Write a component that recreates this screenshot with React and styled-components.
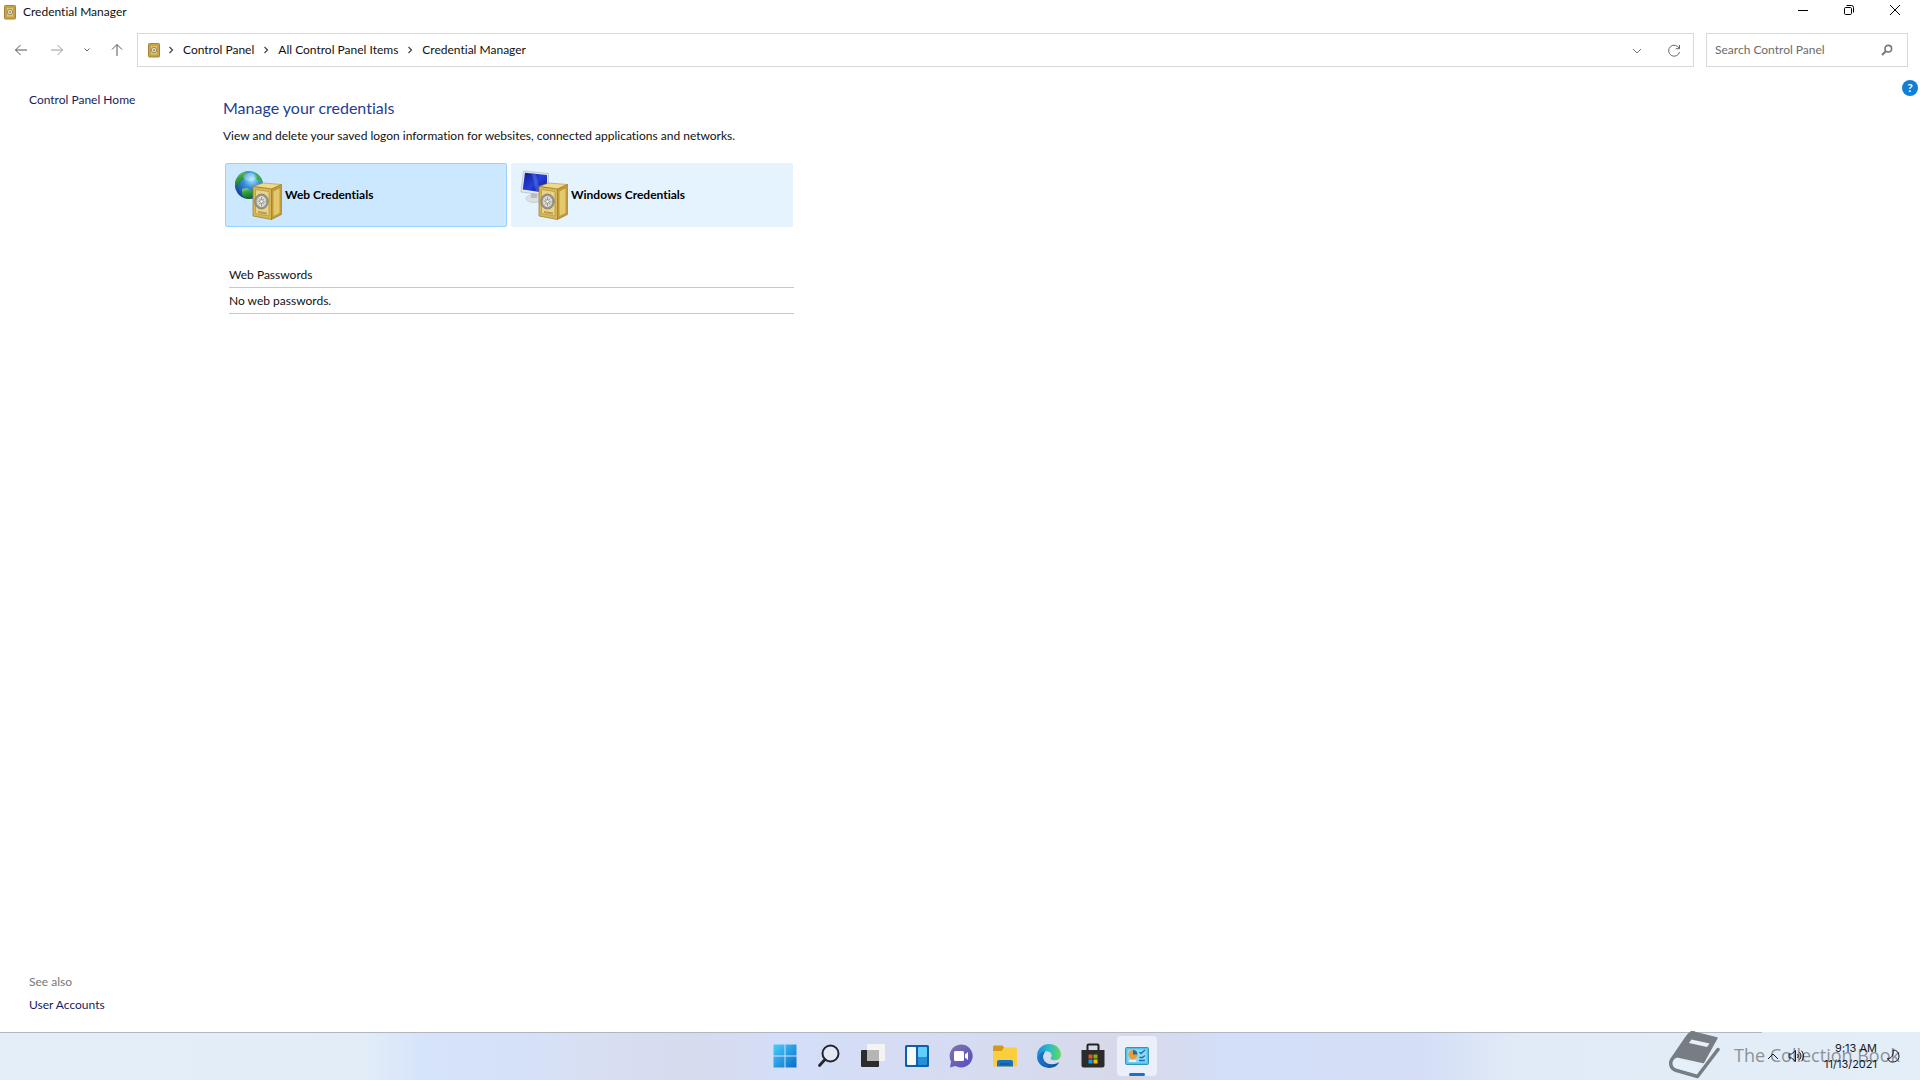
import React, { useState } from 'react';
import styled, { createGlobalStyle } from 'styled-components';

const tiles = [
  { id: 'web', label: 'Web Credentials', heading: 'Web Passwords', empty: 'No web passwords.' },
  { id: 'windows', label: 'Windows Credentials', heading: 'Windows Credentials', empty: 'No Windows credentials.' },
];

const crumbs = ['Control Panel', 'All Control Panel Items', 'Credential Manager'];

function App() {
  const [vault, setVault] = useState('web');
  const current = tiles.find(t => t.id === vault);

  return (
    <Screen>
      <GlobalStyle />

      <TitleBar>
        <SmallSafe />
        <Title>Credential Manager</Title>
        <WindowButton aria-label="Minimize"><Line viewBox="0 0 12 12" $size={12}><path d="M1 6.5h10" /></Line></WindowButton>
        <WindowButton aria-label="Restore">
          <Line viewBox="0 0 12 12" $size={12}>
            <rect x="1.5" y="3.5" width="7" height="7" rx="1.2" />
            <path d="M3.5 1.5h5a2 2 0 0 1 2 2v5" />
          </Line>
        </WindowButton>
        <WindowButton aria-label="Close"><Line viewBox="0 0 12 12" $size={12}><path d="M1 1l10 10M11 1L1 11" /></Line></WindowButton>
      </TitleBar>

      <NavBar>
        <NavButtons>
          <IconButton $width={32} $color="#555" aria-label="Back"><Line viewBox="0 0 14 14" $size={14}><path d="M13 7H1.5M6.5 2l-5 5 5 5" /></Line></IconButton>
          <IconButton $width={32} $color="#9a9a9a" aria-label="Forward"><Line viewBox="0 0 14 14" $size={14}><path d="M1 7h11.5M7.5 2l5 5-5 5" /></Line></IconButton>
          <IconButton $width={20} $color="#666" aria-label="Recent locations"><Line viewBox="0 0 8 8" $size={8}><path d="M1.5 2.5l2.5 2.5 2.5-2.5" /></Line></IconButton>
          <IconButton $width={32} $color="#555" aria-label="Up"><Line viewBox="0 0 14 14" $size={14}><path d="M7 13V1.5M2 6.5l5-5 5 5" /></Line></IconButton>
        </NavButtons>
        <AddressBar>
          <SmallSafe />
          <Crumbs aria-label="Location">
            {crumbs.map(name => (
              <React.Fragment key={name}>
                <CrumbArrow viewBox="0 0 6 8"><path d="M1.5 1l3 3-3 3" /></CrumbArrow>
                <Crumb href="#">{name}</Crumb>
              </React.Fragment>
            ))}
          </Crumbs>
          <IconButton $width={37} $color="#777" aria-label="Previous locations"><Line viewBox="0 0 10 10" $size={10}><path d="M1 4l4 4 4-4" /></Line></IconButton>
          <IconButton $width={37} $color="#666" aria-label="Refresh">
            <Line viewBox="0 0 14 14" $size={14}><path d="M12.2 5.500A5.500 5.500 0 1 0 12.500 9M12.500 2V5.700H8.800" /></Line>
          </IconButton>
        </AddressBar>
        <SearchBox>
          <SearchInput type="text" placeholder="Search Control Panel" aria-label="Search Control Panel" />
          <svg width="12" height="12" viewBox="0 0 12 12" fill="none" stroke="#777">
            <circle cx="7.3" cy="4.7" r="3.3" strokeWidth="1.6" />
            <path d="M5 7L1 11" strokeWidth="2" />
          </svg>
        </SearchBox>
      </NavBar>

      <Content>
        <Sidebar>
          <SideLink href="#">Control Panel Home</SideLink>
          <SeeAlso>
            <SeeAlsoTitle>See also</SeeAlsoTitle>
            <SideLink href="#">User Accounts</SideLink>
          </SeeAlso>
        </Sidebar>

        <Main>
          <Heading>Manage your credentials</Heading>
          <Description>View and delete your saved logon information for websites, connected applications and networks.</Description>
          <Tiles>
            {tiles.map(t => (
              <Tile key={t.id} $selected={vault === t.id} aria-pressed={vault === t.id} onClick={() => setVault(t.id)}>
                {t.id === 'web' ? <WebIcon /> : <WindowsIcon />}
                {t.label}
              </Tile>
            ))}
          </Tiles>
          <List>
            <ListRow>{current.heading}</ListRow>
            <ListRow>{current.empty}</ListRow>
          </List>
        </Main>

        <HelpButton aria-label="Help">?</HelpButton>
      </Content>

      <Taskbar>
        <Watermark>
          <Book />
          The Collection Book
        </Watermark>
        <Apps>
          <AppButton aria-label="Start"><StartIcon /></AppButton>
          <AppButton aria-label="Search"><SearchIcon /></AppButton>
          <AppButton aria-label="Task View"><TaskViewIcon /></AppButton>
          <AppButton aria-label="Widgets"><WidgetsIcon /></AppButton>
          <AppButton aria-label="Chat"><ChatIcon /></AppButton>
          <AppButton aria-label="File Explorer"><FolderIcon /></AppButton>
          <AppButton aria-label="Edge"><EdgeIcon /></AppButton>
          <AppButton aria-label="Microsoft Store"><StoreIcon /></AppButton>
          <AppButton aria-label="Control Panel" $active><ControlPanelIcon /></AppButton>
        </Apps>
        <Tray>
          <TrayButton $width={24} aria-label="Show hidden icons"><Line viewBox="0 0 12 12" $size={12}><path d="M1 9l5-5 5 5" /></Line></TrayButton>
          <TrayButton $width={24} aria-label="Volume">
            <Line viewBox="0 0 18 14" $size={18}>
              <path d="M1 5h2.5L7.5 1.5v11L3.5 9H1zM9.5 5a3 3 0 0 1 0 4M11.5 3.3a5.5 5.5 0 0 1 0 7.4M13.5 1.7a8 8 0 0 1 0 10.6" />
            </Line>
          </TrayButton>
          <Clock>
            <span>9:13 AM</span>
            <span>11/13/2021</span>
          </Clock>
          <TrayButton $width={24} aria-label="Focus assist">
            <Line viewBox="0 0 14 14" $size={14}><path d="M7 1a6 6 0 1 1-5.5 8.500C5 10 8 6 7 1z" /></Line>
          </TrayButton>
        </Tray>
      </Taskbar>
    </Screen>
  )
}

const SmallSafe = () => (
  <svg width="12" height="15" viewBox="0 0 12 15">
    <rect x="0.5" y="0.5" width="11" height="13.5" rx="0.8" fill="#c9a545" stroke="#a3843a" />
    <rect x="2.5" y="2.5" width="7" height="9.5" fill="#dcc473" stroke="#b89b4c" strokeWidth="0.7" />
    <circle cx="6" cy="7" r="2.700" fill="#eadfb4" stroke="#8d8564" strokeWidth="0.9" />
    <circle cx="6" cy="7" r="1" fill="#8a8468" />
  </svg>
)

const BigSafe = () => (
  <g>
    <path d="M19 16.500L29 13 47.500 14.500 37.500 19z" fill="#f0d98c" stroke="#b08d38" strokeWidth="0.6" />
    <path d="M37.500 19l10-4.500v30l-10 5z" fill="#c29a3c" stroke="#957428" strokeWidth="0.6" />
    <path d="M39.500 21.500l6-3v24.500l-6 3z" fill="#e3c96c" />
    <path d="M19 16.500l18.500 2.500v30.500L19 46z" fill="#d8b852" stroke="#96772c" strokeWidth="0.7" />
    <path d="M21.500 19.500l13.500 2v24.500l-13.500-2.500z" fill="#e9d388" stroke="#b3913f" strokeWidth="0.7" />
    <path d="M24 41l9 1.500v2l-9-1.500z" fill="#bd9a45" />
    <ellipse cx="27.500" cy="31.500" rx="6.800" ry="7.500" fill="#99978b" stroke="#807d70" strokeWidth="0.8" />
    <ellipse cx="27.500" cy="31.500" rx="5" ry="5.800" fill="#dfded8" stroke="#8e8c83" strokeDasharray="1 1" />
    <path d="M27.500 27v9M23.500 31l8 1M25 28.500l5 6M30 28.500l-5 6" stroke="#8e8c83" strokeWidth="0.9" />
    <circle cx="27.500" cy="31.500" r="1.700" fill="#f4f3ee" stroke="#77756d" strokeWidth="0.5" />
  </g>
)

const WebIcon = () => (
  <svg width="50" height="50" viewBox="0 0 50 50">
    <defs>
      <radialGradient id="sea" cx="60%" cy="30%" r="75%">
        <stop offset="0" stopColor="#a3ebff" />
        <stop offset="0.4" stopColor="#378fdc" />
        <stop offset="1" stopColor="#123b91" />
      </radialGradient>
      <linearGradient id="land" x1="0" y1="0" x2="0.3" y2="1">
        <stop offset="0" stopColor="#a5dc80" />
        <stop offset="0.4" stopColor="#38a548" />
        <stop offset="1" stopColor="#126d25" />
      </linearGradient>
    </defs>
    <circle cx="15" cy="15" r="14" fill="url(#sea)" />
    <path d="M3 8C5 4 8 2 12 1.500l1 2-3 2 1 3-4 2-2 4-3 1v3c-1-3-1-7 1-10.500z" fill="url(#land)" />
    <path d="M20 2.500c4 1.500 7 5 8.500 9l-3 1-2-3-2-1-1-3z" fill="#3eaa51" />
    <path d="M8 19l5-1 3 2 4 1v4l-4 4c-4 0-7-2-8-5z" fill="url(#land)" />
    <ellipse cx="16" cy="7" rx="7" ry="4" fill="#fff" opacity="0.25" />
    <BigSafe />
  </svg>
)

const WindowsIcon = () => (
  <svg width="50" height="50" viewBox="0 0 50 50">
    <defs>
      <linearGradient id="screen" x1="0" y1="0" x2="1" y2="1">
        <stop offset="0" stopColor="#101a98" />
        <stop offset="0.5" stopColor="#2541d8" />
        <stop offset="1" stopColor="#0a1288" />
      </linearGradient>
    </defs>
    <ellipse cx="14" cy="28.500" rx="8" ry="4" fill="#dcdfe2" stroke="#b9bdc2" strokeWidth="0.6" />
    <path d="M11 20l6 1v7h-6z" fill="#b8bdc3" />
    <path d="M3.500 1L28.500 3.500v22L1 22z" fill="#e3e8ed" stroke="#a9b0b8" strokeWidth="0.6" />
    <path d="M5 2.800L27 5v18L2.800 19.500z" fill="url(#screen)" />
    <path d="M12 3.600l4 .5 4 18-4-.600z" fill="#6a82f0" opacity="0.4" />
    <BigSafe />
  </svg>
)

const Book = () => (
  <svg width="52" height="48" viewBox="0 0 52 48">
    <path d="M25 1L49 7 35.500 31.500 8 25.500z" fill="#777d83" stroke="#777d83" strokeWidth="1.500" strokeLinejoin="round" />
    <path d="M25 1C22 2 20 5 18 8L3.500 29c-1.500 3-1 8 3.500 10L29.500 45.500 50 18.500" fill="none" stroke="#777d83" strokeWidth="3.500" strokeLinejoin="round" strokeLinecap="round" />
    <path d="M22 4L4 29l5-2.500 4-8z" fill="#777d83" />
    <path d="M6 30.500c2-2 4-1.500 6-1l20.500 5c-3 2-3.500 5-3 8.500L9 37.500c-3-1-4.500-4-3-7z" fill="#e6f0fa" />
    <path d="M23.500 8.500l18 4-2.500 3.500-18-4z" fill="#e6f0fa" />
  </svg>
)

const StartIcon = () => (
  <svg width="24" height="24" viewBox="0 0 24 24">
    <defs>
      <linearGradient id="start" x1="0" y1="0" x2="24" y2="24" gradientUnits="userSpaceOnUse">
        <stop offset="0" stopColor="#4fd0fb" />
        <stop offset="1" stopColor="#0669c9" />
      </linearGradient>
    </defs>
    <path d="M.5.5h11v11H.5zM12.5.5h11v11h-11zM.5 12.5h11v11H.5zM12.5 12.5h11v11h-11z" fill="url(#start)" />
  </svg>
)

const SearchIcon = () => (
  <svg width="24" height="24" viewBox="0 0 24 24" fill="none" stroke="#23262d">
    <circle cx="13.5" cy="9.5" r="8" fill="#e3e8f5" strokeWidth="2" />
    <path d="M8 15.5l-5.5 6" strokeWidth="2.8" strokeLinecap="round" />
  </svg>
)

const TaskViewIcon = () => (
  <svg width="24" height="24" viewBox="0 0 24 24">
    <rect x="0" y="6" width="18" height="17" rx="1" fill="#2c2c2e" />
    <rect x="6" y="0" width="18" height="17" rx="1" fill="#f4f4f4" />
    <rect x="6" y="6" width="12" height="11" fill="#b5b5b5" />
  </svg>
)

const WidgetsIcon = () => (
  <svg width="24" height="24" viewBox="0 0 24 24">
    <rect x="0" y="1" width="24" height="22" rx="1.5" fill="#0f60a8" />
    <rect x="2" y="3" width="9" height="18" rx="0.8" fill="#f6fafd" />
    <rect x="13" y="3" width="9" height="10" rx="0.8" fill="#62cffa" />
    <rect x="13" y="13" width="9" height="8" rx="0.8" fill="#258fda" />
  </svg>
)

const ChatIcon = () => (
  <svg width="24" height="24" viewBox="0 0 24 24">
    <defs>
      <linearGradient id="chat" x1="0" y1="0" x2="1" y2="1">
        <stop offset="0" stopColor="#8176a5" />
        <stop offset="1" stopColor="#594ac9" />
      </linearGradient>
    </defs>
    <path d="M12 .5A11.500 11.500 0 1 1 6.500 22L1 23.500l1-6A11.500 11.500 0 0 1 12 .5z" fill="url(#chat)" />
    <rect x="5" y="7" width="10" height="10" rx="1.5" fill="#fff" />
    <path d="M16 10.500l3-2.500v8l-3-2.500z" fill="#fff" />
  </svg>
)

const FolderIcon = () => (
  <svg width="26" height="24" viewBox="0 0 26 24">
    <path d="M1 3a1.500 1.500 0 0 1 1.500-1.500h8L12.500 4 10 7H1z" fill="#d29a16" />
    <path d="M12 3.500h11.500A1.500 1.500 0 0 1 25 5v16.500a1 1 0 0 1-1 1H2a1 1 0 0 1-1-1V7h8.500z" fill="#fcce3d" />
    <path d="M5 22.500V18a2 2 0 0 1 2-2h12a2 2 0 0 1 2 2v4.500z" fill="#1673c4" />
    <path d="M8 20h10" stroke="#0d589e" strokeWidth="1.5" />
  </svg>
)

const EdgeIcon = () => (
  <svg width="26" height="26" viewBox="0 0 24 24">
    <defs>
      <linearGradient id="edgeTop" x1="0" y1="0.5" x2="1" y2="0.5">
        <stop offset="0" stopColor="#1b8cd8" />
        <stop offset="0.5" stopColor="#2cbcc8" />
        <stop offset="1" stopColor="#66d85a" />
      </linearGradient>
      <linearGradient id="edgeLow" x1="0" y1="0" x2="1" y2="1">
        <stop offset="0" stopColor="#178ade" />
        <stop offset="1" stopColor="#0e4c92" />
      </linearGradient>
    </defs>
    <path d="M1 11C1.500 5 6.500 1 12 1c7 0 11 5 11 9.500 0 3.500-2.700 5.500-5.500 5.500-2.500 0-4-1-4-2 0-.7 1-1 1-2.700C14.500 9 12 7.500 9 7.500 5 7.500 2 9.500 1 13z" fill="url(#edgeTop)" />
    <path d="M1 13c1-4 4-5.500 8-5.500C5 10 5.500 19 14 19.500c3.500.2 6-1 7.500-2C20 21 16.500 23 12 23 6 23 1 18.500 1 13z" fill="url(#edgeLow)" />
    <path d="M9 7.500c-4 2.500-4 11.500 3.500 15.200C7 22 3 17 4 12c.7-2.500 2.500-4 5-4.500z" fill="#1c6dbd" />
  </svg>
)

const StoreIcon = () => (
  <svg width="24" height="26" viewBox="0 0 24 26">
    <path d="M6.500 8V2.500a1 1 0 0 1 1-1h9a1 1 0 0 1 1 1V8" fill="none" stroke="#222" strokeWidth="2" />
    <path d="M.5 7h23v15.500a2 2 0 0 1-2 2h-19a2 2 0 0 1-2-2z" fill="#2b2b2b" />
    <rect x="7.5" y="11.5" width="4" height="4" fill="#ef4f23" />
    <rect x="12.5" y="11.5" width="4" height="4" fill="#7eb901" />
    <rect x="7.5" y="16.5" width="4" height="4" fill="#03a3ee" />
    <rect x="12.5" y="16.5" width="4" height="4" fill="#fdb900" />
  </svg>
)

const ControlPanelIcon = () => (
  <svg width="24" height="20" viewBox="0 0 24 20">
    <rect x="0.5" y="1.5" width="23" height="17" rx="1" fill="#58bfe6" stroke="#2e95bd" />
    <rect x="2.5" y="3.500" width="19" height="13" fill="#8fdaf5" />
    <circle cx="8" cy="8.500" r="4.500" fill="#f29a2e" />
    <path d="M8 8.500V4a4.500 4.500 0 0 1 4.500 4.500z" fill="#176cb8" />
    <path d="M14.500 6l1.500 1.500L20 4M14.500 11.500h3l2.500-2M14 14.500h6" stroke="#176cb8" strokeWidth="1.300" fill="none" />
    <path d="M4 15h7" stroke="#fff" strokeWidth="1.5" />
  </svg>
)

const GlobalStyle = createGlobalStyle`
  * {
    box-sizing: border-box;
  }

  body {
    margin: 0;
    background: #fff;
    color: #111;
    font: 12px/16px Lato, 'Open Sans', sans-serif;
    font-variant-ligatures: none;
  }

  button, input {
    font: inherit;
    font-variant-ligatures: none;
    color: inherit;
    border: 0;
    padding: 0;
    background: none;
  }

  svg {
    display: block;
    flex: none;
  }
`

const Screen = styled.div`
  display: flex;
  flex-direction: column;
  min-height: 100vh;
`

const Line = styled.svg`
  width: ${p => p.$size}px;
  height: ${p => p.$size}px;
  fill: none;
  stroke: currentColor;
`

const TitleBar = styled.header`
  display: flex;
  align-items: center;
  height: 24px;
  padding: 0 2px 0 4px;
`

const Title = styled.div`
  flex: 1;
  margin-left: 7px;
`

const WindowButton = styled.button`
  display: flex;
  align-items: center;
  justify-content: center;
  width: 46px;
  height: 20px;
  margin-bottom: 4px;
  color: #000;

  &:hover {
    background: #e8e8e8;
  }
`

const NavBar = styled.div`
  display: flex;
  align-items: center;
  padding: 9px 12px 0 5px;
`

const NavButtons = styled.div`
  display: flex;
  gap: 4px;
  width: 132px;
`

const IconButton = styled.button`
  display: flex;
  align-items: center;
  justify-content: center;
  width: ${p => p.$width}px;
  height: 32px;
  color: ${p => p.$color};
`

const AddressBar = styled.div`
  display: flex;
  align-items: center;
  flex: 1;
  height: 34px;
  padding: 0 1px 0 10px;
  border: 1px solid #d9d9d9;
`

const Crumbs = styled.nav`
  display: flex;
  align-items: center;
  gap: 9px;
  flex: 1;
  margin-left: 8px;
`

const Crumb = styled.a`
  color: inherit;
  text-decoration: none;
`

const CrumbArrow = styled.svg`
  width: 6px;
  height: 8px;
  fill: none;
  stroke: #444;
  stroke-width: 1.2;
`

const SearchBox = styled.label`
  display: flex;
  align-items: center;
  width: 202px;
  height: 34px;
  margin-left: 12px;
  padding: 0 14px 0 8px;
  border: 1px solid #d9d9d9;
`

const SearchInput = styled.input`
  flex: 1;
  min-width: 0;
  outline: 0;

  &::placeholder {
    color: #6b6b6b;
    opacity: 1;
  }
`

const Content = styled.div`
  display: flex;
  flex: 1;
`

const Sidebar = styled.aside`
  display: flex;
  flex-direction: column;
  justify-content: space-between;
  align-items: flex-start;
  width: 223px;
  padding: 25px 0 19px 29px;
`

const SideLink = styled.a`
  color: #1a1a5e;
  text-decoration: none;
`

const SeeAlso = styled.div`
  display: flex;
  flex-direction: column;
  gap: 7px;
`

const SeeAlsoTitle = styled.div`
  color: #777;
`

const Main = styled.main`
  flex: 1;
  padding-top: 31px;
`

const Heading = styled.h1`
  margin: 0;
  color: #1c3f94;
  font-size: 16px;
  line-height: 20px;
  font-weight: 400;
`

const Description = styled.p`
  margin: 10px 0 19px;
`

const Tiles = styled.div`
  display: flex;
  gap: 4px;
  padding-left: 2px;
`

const Tile = styled.button`
  display: flex;
  align-items: center;
  gap: 1px;
  width: 282px;
  height: 64px;
  padding-left: 8px;
  border: 1px solid ${p => p.$selected ? '#99d1ff' : '#e5f3ff'};
  border-radius: 2px;
  background: ${p => p.$selected ? '#cce8ff' : '#e5f3ff'};
  color: #000;
  font-weight: 700;
`

const List = styled.div`
  width: 565px;
  margin: 35px 0 0 6px;
`

const ListRow = styled.div`
  padding: 5px 0 4px;
  border-bottom: 1px solid #c8c8c8;
`

const HelpButton = styled.button`
  width: 16px;
  height: 16px;
  margin: 13px 2px 0 0;
  border-radius: 50%;
  background: #0f80d7;
  color: #fff;
  font-weight: 700;
  text-align: center;
`

const Taskbar = styled.footer`
  position: relative;
  display: grid;
  grid-template-columns: 1fr auto 1fr;
  align-items: center;
  height: 48px;
  background: linear-gradient(90deg, #e4eef8 0%, #e3edf8 19%, #d5e3fb 22%, #d5e1f9 27%, #d8dff2 31%, #d6dbee 36%, #d4def8 41%, #d6dbf0 52%, #d7d9e9 59%, #d3def9 64%, #d5def6 74%, #d9e3f6 76%, #e1ebf7 79%, #e4eef8 100%);

  /* the top edge stops short of the tray */
  &::before {
    content: '';
    position: absolute;
    top: 0;
    left: 0;
    right: 158px;
    height: 1px;
    background: #b1b6c3;
  }
`

const Watermark = styled.div`
  position: absolute;
  right: 0;
  top: 0;
  display: flex;
  align-items: center;
  gap: 14px;
  width: 252px;
  height: 46px;
  color: #8b9299;
  font-family: 'Open Sans', sans-serif;
  font-size: 18px;
  line-height: 24px;
  white-space: nowrap;
`

const Apps = styled.div`
  grid-column: 2;
  display: flex;
  gap: 4px;
  padding-left: 2px;
`

const AppButton = styled.button`
  position: relative;
  display: flex;
  align-items: center;
  justify-content: center;
  width: 40px;
  height: 40px;
  border-radius: 4px;
  background: ${p => p.$active ? '#ebeff9' : 'none'};

  &::after {
    content: '';
    display: ${p => p.$active ? 'block' : 'none'};
    position: absolute;
    bottom: 0;
    left: 12px;
    width: 16px;
    height: 3px;
    border-radius: 2px;
    background: #1873c5;
  }
`

const Tray = styled.div`
  position: relative;
  display: flex;
  align-items: center;
  justify-self: end;
  padding-right: 15px;
  color: #15181d;
`

const TrayButton = styled.button`
  display: flex;
  align-items: center;
  justify-content: center;
  width: ${p => p.$width}px;
  height: 40px;
`

const Clock = styled.div`
  display: flex;
  flex-direction: column;
  align-items: flex-end;
  width: 68px;
  margin-right: 4px;
  font-family: Inter, sans-serif;
  font-size: 11px;
  line-height: 16px;
`

export default App
